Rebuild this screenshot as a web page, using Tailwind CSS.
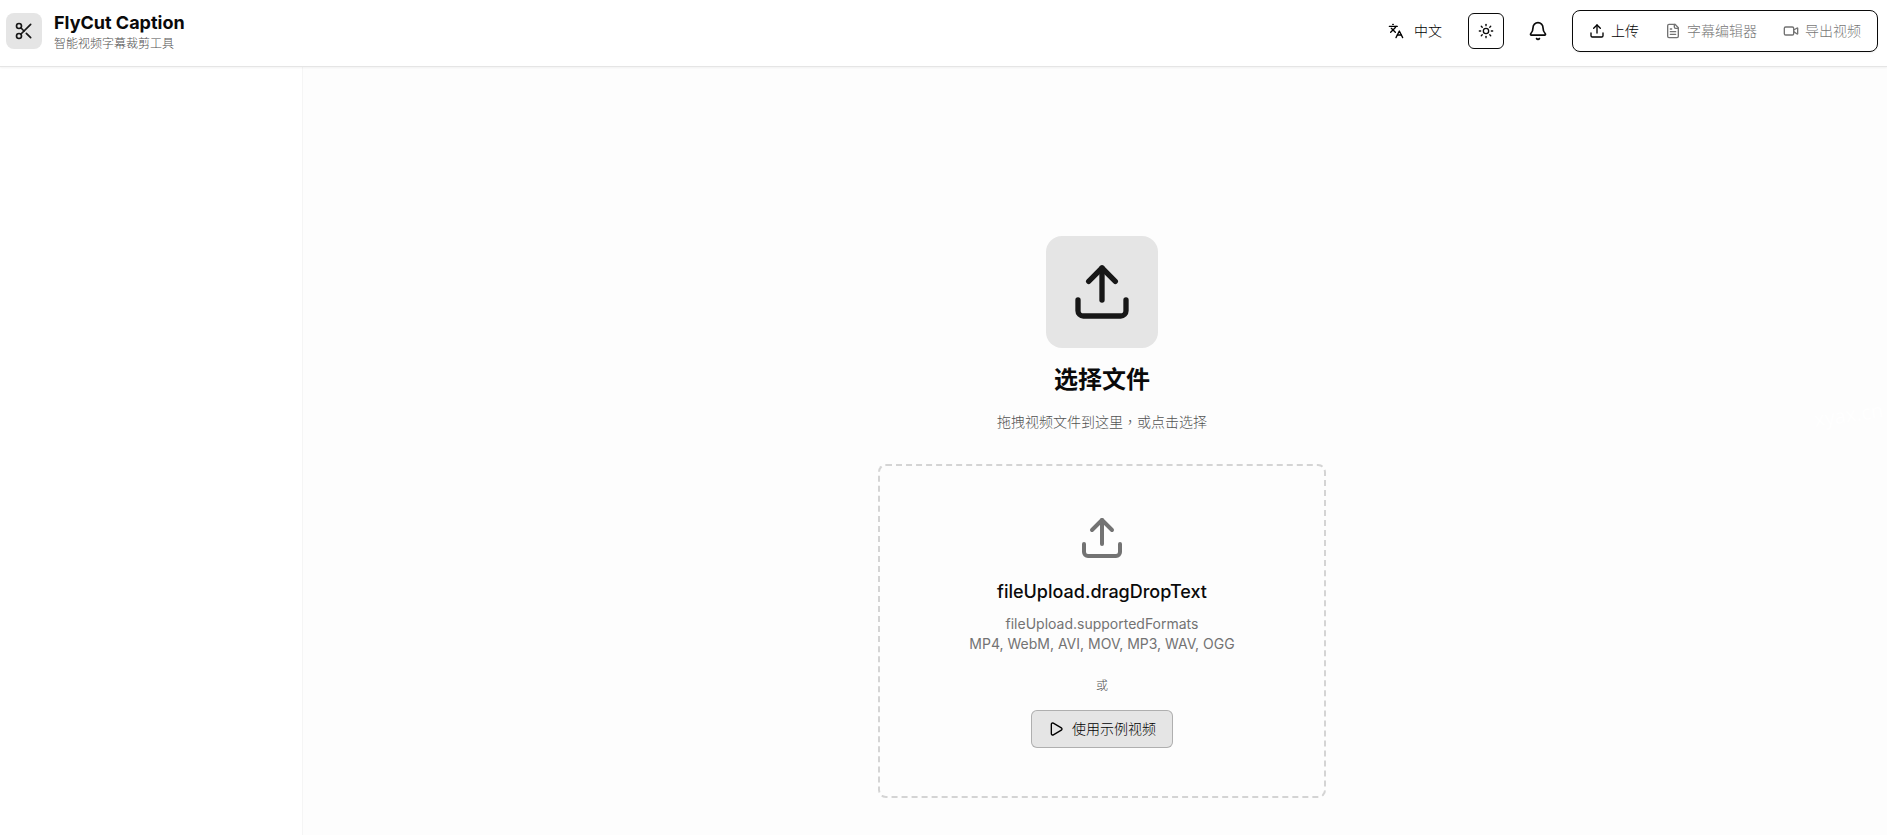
<!DOCTYPE html>
<html lang="zh-CN">
<head>
  <meta charset="UTF-8">
  <meta name="viewport" content="width=device-width, initial-scale=1.0">
  <title>FlyCut Caption</title>
  <script src="https://cdn.jsdelivr.net/npm/@tailwindcss/browser@4"></script>
</head>
<body class="min-h-screen flex flex-col overflow-x-hidden bg-[#fdfdfd] text-neutral-950 font-['Inter','Noto_Sans_CJK_SC',sans-serif]">

  <svg class="hidden">
    <symbol id="upload" viewBox="0 0 24 24">
      <path d="M12 3v12" />
      <path d="m17 8-5-5-5 5" />
      <path d="M21 15v4a2 2 0 0 1-2 2H5a2 2 0 0 1-2-2v-4" />
    </symbol>
  </svg>

  <header class="relative flex items-center justify-between pt-[10px] pb-[14px] pl-[6px] pr-[9px] bg-white border-b border-neutral-200 shadow-xs">
    <div class="flex items-center gap-3">
      <div class="size-9 flex items-center justify-center rounded-lg bg-neutral-200">
        <svg class="size-5 text-neutral-900" viewBox="0 0 24 24" fill="none" stroke="currentColor" stroke-width="2" stroke-linecap="round" stroke-linejoin="round">
          <circle cx="6" cy="6" r="3" />
          <path d="M8.12 8.12 12 12" />
          <path d="M20 4 8.12 15.88" />
          <circle cx="6" cy="18" r="3" />
          <path d="M14.8 14.8 20 20" />
        </svg>
      </div>
      <div>
        <h1 class="text-lg leading-[26px] font-bold">FlyCut Caption</h1>
        <p class="text-xs font-light text-neutral-600">智能视频字幕裁剪工具</p>
      </div>
    </div>

    <div class="flex items-center gap-4">
      <button type="button" class="h-9 px-[10px] flex items-center gap-[10px] rounded-md text-sm font-light text-black cursor-pointer">
        <svg class="size-4" viewBox="0 0 24 24" fill="none" stroke="currentColor" stroke-width="2" stroke-linecap="round" stroke-linejoin="round">
          <path d="m5 8 6 6" />
          <path d="m4 14 6-6 2-3" />
          <path d="M2 5h12" />
          <path d="M7 2h1" />
          <path d="m22 22-5-10-5 10" />
          <path d="M14 18h6" />
        </svg>
        中文
      </button>
      <button type="button" aria-label="切换主题" class="size-9 flex items-center justify-center rounded-md border border-neutral-950 cursor-pointer">
        <svg class="size-4" viewBox="0 0 24 24" fill="none" stroke="currentColor" stroke-width="2" stroke-linecap="round" stroke-linejoin="round">
          <circle cx="12" cy="12" r="4" />
          <path d="M12 2v2" />
          <path d="M12 20v2" />
          <path d="m4.93 4.93 1.41 1.41" />
          <path d="m17.66 17.66 1.41 1.41" />
          <path d="M2 12h2" />
          <path d="M20 12h2" />
          <path d="m6.34 17.66-1.41 1.41" />
          <path d="m19.07 4.93-1.41 1.41" />
        </svg>
      </button>
      <button type="button" aria-label="通知" class="size-9 flex items-center justify-center rounded-md cursor-pointer">
        <svg class="size-5" viewBox="0 0 24 24" fill="none" stroke="currentColor" stroke-width="2" stroke-linecap="round" stroke-linejoin="round">
          <path d="M10.268 21a2 2 0 0 0 3.464 0" />
          <path d="M3.262 15.326A1 1 0 0 0 4 17h16a1 1 0 0 0 .74-1.673C19.41 13.956 18 12.499 18 8A6 6 0 0 0 6 8c0 4.499-1.411 5.956-2.738 7.326" />
        </svg>
      </button>
      <nav class="flex items-center gap-0.5 p-1 rounded-lg border border-neutral-950 bg-white shadow-xs">
        <button type="button" class="h-8 px-3 flex items-center gap-1.5 rounded-md text-sm font-light text-black cursor-pointer">
          <svg class="size-4" fill="none" stroke="currentColor" stroke-width="2" stroke-linecap="round" stroke-linejoin="round"><use href="#upload" /></svg>
          上传
        </button>
        <button type="button" disabled class="h-8 px-3 flex items-center gap-1.5 rounded-md text-sm font-light text-black opacity-55">
          <svg class="size-4" viewBox="0 0 24 24" fill="none" stroke="currentColor" stroke-width="2" stroke-linecap="round" stroke-linejoin="round">
            <path d="M15 2H6a2 2 0 0 0-2 2v16a2 2 0 0 0 2 2h12a2 2 0 0 0 2-2V7Z" />
            <path d="M14 2v4a2 2 0 0 0 2 2h4" />
            <path d="M10 9H8" />
            <path d="M16 13H8" />
            <path d="M16 17H8" />
          </svg>
          字幕编辑器
        </button>
        <button type="button" disabled class="h-8 px-3 flex items-center gap-1.5 rounded-md text-sm font-light text-black opacity-55">
          <svg class="size-4" viewBox="0 0 24 24" fill="none" stroke="currentColor" stroke-width="2" stroke-linecap="round" stroke-linejoin="round">
            <path d="m16 13 5.223 3.482a.5.5 0 0 0 .777-.416V7.87a.5.5 0 0 0-.752-.432L16 10.5" />
            <rect x="2" y="6" width="14" height="12" rx="2" />
          </svg>
          导出视频
        </button>
      </nav>
    </div>
  </header>

  <div class="flex-1 flex">
    <aside class="w-[303px] shrink-0 bg-white border-r border-neutral-100"></aside>

    <main class="relative flex-1 flex flex-col items-center pt-[169px] pb-9 pl-[14px]">
      <div class="size-28 flex items-center justify-center rounded-2xl bg-neutral-200">
        <svg class="size-16 text-neutral-900" fill="none" stroke="currentColor" stroke-width="2" stroke-linecap="round" stroke-linejoin="round"><use href="#upload" /></svg>
      </div>
      <h2 class="mt-4 text-2xl font-bold">选择文件</h2>
      <p class="mt-4 text-sm font-light text-neutral-600">拖拽视频文件到这里<span class="leading-none font-['Noto_Sans_CJK_TC',sans-serif]" lang="zh-TW">，</span>或点击选择</p>

      <section class="mt-8 w-full max-w-md p-12 flex flex-col items-center rounded-lg border-2 border-dashed border-neutral-300 text-center">
        <svg class="size-12 text-neutral-500" fill="none" stroke="currentColor" stroke-width="2" stroke-linecap="round" stroke-linejoin="round"><use href="#upload" /></svg>
        <h3 class="mt-4 text-lg font-medium">fileUpload.dragDropText</h3>
        <p class="mt-2 text-sm text-neutral-500">fileUpload.supportedFormats<br>MP4, WebM, AVI, MOV, MP3, WAV, OGG</p>
        <p class="mt-6 text-xs font-light text-neutral-600">或</p>
        <button type="button" class="mt-4 h-[38px] px-4 flex items-center gap-2 rounded-md border border-neutral-400/80 bg-neutral-200 text-sm font-light text-black cursor-pointer">
          <svg class="size-4" viewBox="0 0 24 24" fill="none" stroke="currentColor" stroke-width="2" stroke-linecap="round" stroke-linejoin="round">
            <path d="M5 5a2 2 0 0 1 3.008-1.728l11.997 6.998a2 2 0 0 1 .003 3.458l-12 7A2 2 0 0 1 5 19z" />
          </svg>
          使用示例视频
        </button>
      </section>

      <!-- faint site mark lying over the page -->
      <span class="absolute top-[334px] right-1 -rotate-8 text-xl text-white font-['Open_Sans',sans-serif] select-none pointer-events-none" aria-hidden="true">xyax.cn</span>
    </main>
  </div>

</body>
</html>
